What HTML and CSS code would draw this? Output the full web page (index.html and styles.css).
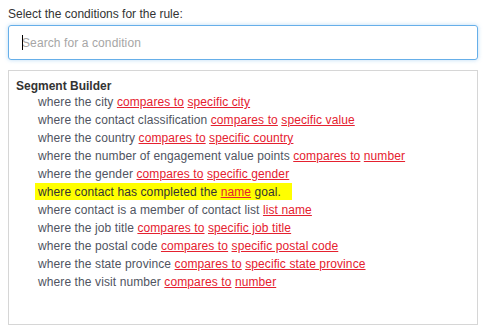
FILE: index.html
```html
<!DOCTYPE html>
<html lang="en">

<head>
  <meta charset="UTF-8" />
  <meta name="viewport" content="width=device-width, initial-scale=1.0" />
  <title>Rule conditions</title>
  <link rel="stylesheet" href="styles.css">
</head>

<body>
  <div class="rule-picker">
    <label class="rule-label" for="condition-search">Select the conditions for the rule:</label>
    <div class="search-box">
      <span class="caret"></span>
      <input id="condition-search" class="search-input" type="text" placeholder="Search for a condition">
    </div>
    <div class="condition-list">
      <div class="group-title">Segment Builder</div>
      <ul class="conditions">
        <li>where the city <a href="#">compares to</a> <a href="#">specific city</a></li>
        <li>where the contact classification <a href="#">compares to</a> <a href="#">specific value</a></li>
        <li>where the country <a href="#">compares to</a> <a href="#">specific country</a></li>
        <li>where the number of engagement value points <a href="#">compares to</a> <a href="#">number</a></li>
        <li>where the gender <a href="#">compares to</a> <a href="#">specific gender</a></li>
        <li><span class="marked">where contact has completed the <a href="#">name</a> goal.</span></li>
        <li>where contact is a member of contact list <a href="#">list name</a></li>
        <li>where the job title <a href="#">compares to</a> <a href="#">specific job title</a></li>
        <li>where the postal code <a href="#">compares to</a> <a href="#">specific postal code</a></li>
        <li>where the state province <a href="#">compares to</a> <a href="#">specific state province</a></li>
        <li>where the visit number <a href="#">compares to</a> <a href="#">number</a></li>
      </ul>
    </div>
  </div>
</body>

</html>
```

FILE: styles.css
```css
body {
  margin: 0;
  background: #fff;
  font-family: "Liberation Sans", Arial, sans-serif;
  font-size: 12px;
  color: #333;
}

.rule-picker {
  display: flex;
  flex-direction: column;
  width: 470px;
  padding: 7px 0 0 8px;
}

.rule-label {
  display: block;
  height: 18px;
  line-height: 14px;
  color: #333;
}

.search-box {
  position: relative;
  height: 35px;
  box-sizing: border-box;
  border: 1px solid #66afe9;
  border-radius: 3px;
  box-shadow: 0 0 4px rgba(102, 175, 233, .45);
}

.search-input {
  width: 100%;
  height: 100%;
  box-sizing: border-box;
  padding: 0 13px;
  border: 0;
  outline: none;
  background: transparent;
  font-family: inherit;
  font-size: 12px;
  letter-spacing: .1px;
  color: #555;
}

.search-input::placeholder {
  color: #a6a6a6;
}

/* the blinking text cursor in the shot */
.caret {
  position: absolute;
  top: 9px;
  left: 13px;
  width: 1px;
  height: 15px;
  background: #000;
}

.condition-list {
  height: 255px;
  margin-top: 10px;
  box-sizing: border-box;
  padding: 8px 7px;
  border: 1px solid #d6d6d6;
}

.group-title {
  font-weight: bold;
  line-height: 14px;
  color: #333;
}

.conditions {
  margin: 0;
  padding: 0 0 0 22px;
  list-style: none;
}

.conditions li {
  height: 18px;
  line-height: 18px;
  letter-spacing: .1px;
  color: #4f5461;
}

.conditions a {
  color: #e5212f;
  text-decoration: underline;
}

.marked {
  display: inline-block;
  height: 17px;
  margin-left: -3px;
  padding: 0 11px 0 3px;
  background: #ffff00;
  color: #333;
}
```
